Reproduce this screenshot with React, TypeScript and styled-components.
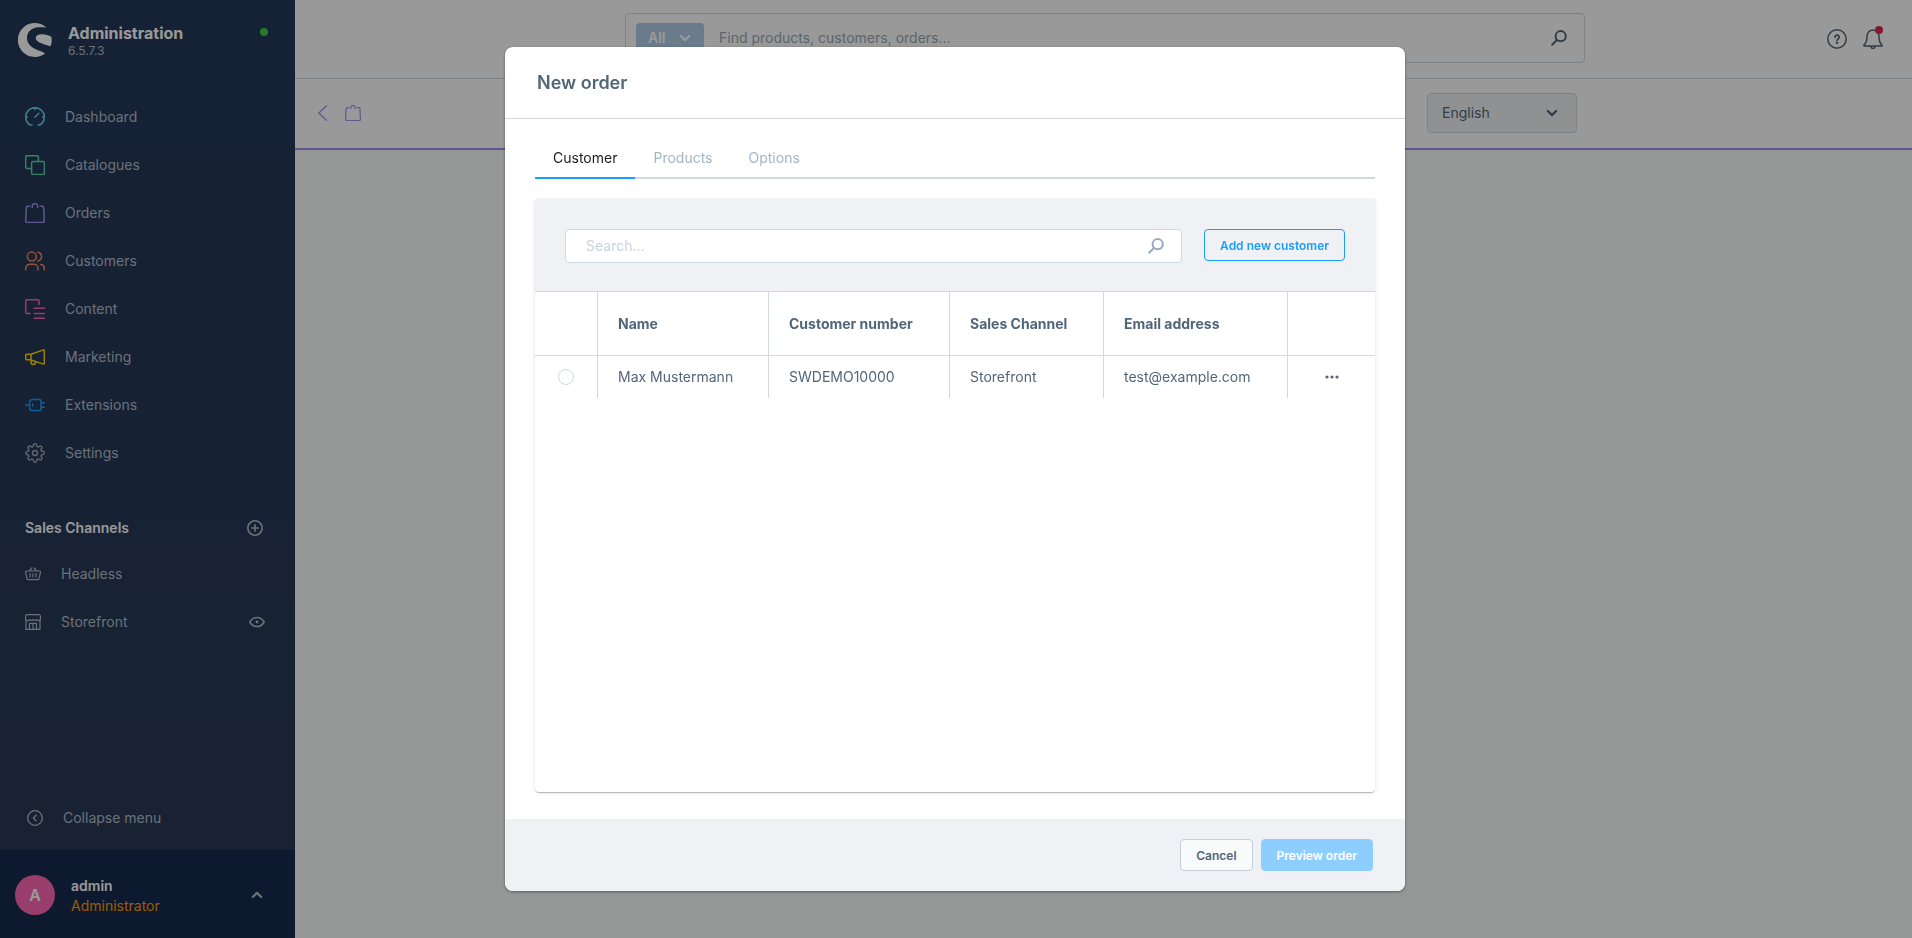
import React from 'react';
import styled, { createGlobalStyle } from 'styled-components';
import { FiSettings } from 'react-icons/fi';

const GlobalStyle = createGlobalStyle`
  *, *::before, *::after { box-sizing: border-box; }
  html, body, #root { height: 100%; }
  body {
    margin: 0;
    font-family: Inter, "Liberation Sans", sans-serif;
    font-size: 14px;
    line-height: 20px;
    color: #52667a;
    background: #f9fafb;
    -webkit-font-smoothing: antialiased;
  }
  button, input, select { font: inherit; color: inherit; }
  button { cursor: pointer; }
  a { color: inherit; text-decoration: none; }
  svg { display: block; flex: none; }
`;

const Page = styled.div`
  display: flex;
  min-height: 100vh;
`;

/* ---------- icons ---------- */

type IconProps = { size?: number; box?: number; weight?: number; children: React.ReactNode };

const Icon = ({ size = 20, box = 20, weight = 1.5, children }: IconProps) => (
  <svg
    width={size}
    height={size}
    viewBox={`0 0 ${box} ${box}`}
    fill="none"
    stroke="currentColor"
    strokeWidth={weight}
    strokeLinecap="round"
    strokeLinejoin="round"
    aria-hidden="true"
  >
    {children}
  </svg>
);

const DashboardIcon = () => (
  <Icon>
    <path d="M7 18H5.2A9.35 9.35 0 1 1 14.8 18H13M10 .8v1.6M.8 10h1.6M19.2 10h-1.6M10 10.3l3.8-4" />
  </Icon>
);
const CatalogueIcon = () => (
  <Icon>
    <path d="M6.4 13.4H2A1.4 1.4 0 0 1 .65 12V2A1.4 1.4 0 0 1 2 .65h10A1.4 1.4 0 0 1 13.4 2v4.4" />
    <rect x="6.6" y="6.6" width="12.8" height="12.8" rx="1.4" />
  </Icon>
);
const BagIcon = ({ size = 20, weight = 1.5 }: { size?: number; weight?: number }) => (
  <Icon size={size} weight={weight}>
    <path d="M4.8 3.3H2.7a1.4 1.4 0 0 0-1.4 1.3L.7 18a1.3 1.3 0 0 0 1.3 1.4h16a1.3 1.3 0 0 0 1.3-1.4L18.7 4.6a1.4 1.4 0 0 0-1.4-1.3h-2.1M7.3 4.5V3.3a2.7 2.7 0 0 1 5.4 0v1.2" />
  </Icon>
);
const CustomersIcon = () => (
  <Icon>
    <circle cx="6.8" cy="5.6" r="4.5" />
    <path d="M13 1.2a4.5 4.5 0 0 1 0 8.8M.7 18.9v-1.6a4 4 0 0 1 4-4h4.2a4 4 0 0 1 4 4v1.6M15.6 13.4a4 4 0 0 1 3.7 4v1.5" />
  </Icon>
);
const ContentIcon = () => (
  <Icon>
    <path d="M5 14.4H2A1.4 1.4 0 0 1 .7 13V2A1.4 1.4 0 0 1 2 .7h10.6A1.4 1.4 0 0 1 14 2v3.6M9.2 9.3h10.2M9.2 14.4h10.2M9.2 19.2h10.2" />
  </Icon>
);
const MarketingIcon = () => (
  <Icon>
    <path d="M6 7.3 18.5 2.9a.6.6 0 0 1 .8.6v13a.6.6 0 0 1-.8.6L6 13V7.3H1.6a.9.9 0 0 0-.9.9v3.6c0 .5.4.9.9.9H6M6.1 13v2a2.2 2.2 0 0 0 4.4.4v-.8" />
  </Icon>
);
const ExtensionsIcon = () => (
  <Icon>
    <path d="M.7 10h4M7.4 4.4h7.2a1.4 1.4 0 0 1 1.4 1.4v8.4a1.4 1.4 0 0 1-1.4 1.4H7.4a2.8 2.8 0 0 1-2.8-2.8V7.2a2.8 2.8 0 0 1 2.8-2.8zM16 7.7h3.4M16 12.3h3.4M7.6 9v2" />
  </Icon>
);
const BasketIcon = () => (
  <Icon size={16} box={16} weight={1.2}>
    <path d="M1.4 5h13.2a.9.9 0 0 1 .9 1.1L14 12.6a1.2 1.2 0 0 1-1.2 1H3.2a1.2 1.2 0 0 1-1.2-1L.5 6.1A.9.9 0 0 1 1.4 5zM4.3 4.8l2.5-2.8M11.7 4.8 9.2 2M5 7.7v3.2M8 7.7v3.2M11 7.7v3.2" />
  </Icon>
);
const StoreIcon = () => (
  <Icon size={16} box={16} weight={1.2}>
    <path d="M1 6v9.4h14V6M2.2.6h11.6A1.6 1.6 0 0 1 15.4 2.200v2a1.900 1.900 0 0 1-3.600 1.200 2.200 2.200 0 0 1-3.800 0 2.200 2.200 0 0 1-3.800 0A1.900 1.900 0 0 1 .6 4.200v-2A1.600 1.600 0 0 1 2.200.6zM4.500 15.400V9.300h7v6.100M8 9.300v6.100" />
  </Icon>
);
const EyeIcon = () => (
  <Icon size={16} box={16} weight={1.5}>
    <path d="M.8 8C2.6 5 5.1 3.4 8 3.4S13.4 5 15.2 8c-1.8 3-4.3 4.6-7.2 4.6S2.6 11 .8 8z" />
    <circle cx="8" cy="8" r="0.7" fill="currentColor" />
  </Icon>
);
const PlusCircleIcon = () => (
  <Icon size={16} box={16} weight={1.6}>
    <circle cx="8" cy="8" r="7.2" />
    <path d="M8 4.8v6.4M4.8 8h6.4" />
  </Icon>
);
const CollapseIcon = () => (
  <Icon size={16} box={16} weight={1.3}>
    <circle cx="8" cy="8" r="7.3" />
    <path d="M9 5.3 6.4 8 9 10.7" />
  </Icon>
);
const ChevronIcon = ({ up = false }: { up?: boolean }) => (
  <Icon size={12} box={12} weight={2.2}>
    <path d={up ? 'M1.8 8 6 3.9 10.2 8' : 'M1.8 4 6 8.1 10.2 4'} />
  </Icon>
);
const BackIcon = () => (
  <Icon size={16} box={16} weight={1.3}>
    <path d="M11.5.8 3.8 8l7.7 7.2" />
  </Icon>
);
const SearchIcon = () => (
  <Icon size={16} box={16} weight={2}>
    <circle cx="9.7" cy="6.2" r="5.1" />
    <path d="M5.9 10 1.2 14.8" />
  </Icon>
);
const HelpIcon = () => (
  <Icon weight={1.5}>
    <circle cx="10" cy="10" r="9.2" />
    <path d="M8 8.3a2.1 2.1 0 1 1 3.2 1.7c-.8.5-1.2.7-1.2 1.2" strokeWidth="1.7" />
    <circle cx="10" cy="13.7" r="0.5" fill="currentColor" />
  </Icon>
);
const BellIcon = () => (
  <Icon weight={1.5}>
    <path d="M10 .9a6 6 0 0 0-6 6c0 5-1.2 7.500-2.900 9a.7.7 0 0 0 .5 1.200h16.800a.7.7 0 0 0 .5-1.200C17.200 14.400 16 11.900 16 6.900a6 6 0 0 0-6-6zM8.200 18.200a1.900 1.900 0 0 0 3.600 0" />
  </Icon>
);
const DotsIcon = () => (
  <svg width="14" height="4" viewBox="0 0 14 4" fill="currentColor" aria-hidden="true">
    <circle cx="2" cy="2" r="1.6" />
    <circle cx="7" cy="2" r="1.6" />
    <circle cx="12" cy="2" r="1.6" />
  </svg>
);
const Logo = () => (
  <svg width="34" height="34" viewBox="0 0 34 34" fill="#fff" aria-hidden="true">
    <path d="M28.4 4.500A17 17 0 1 0 27 30.600c-.8-.9-3.400-1.900-6.200-3C15.500 25.500 9 22.400 9 14.800 9 9 13.400 4.600 20.500 4.300c2.900-.1 5.300 0 7.900.2z" />
    <path d="M33.400 13.800C31 12 27.600 11.200 23.600 11.200c-3.800 0-5.900 1.500-5.900 3.700 0 3.300 4.600 5 9 6.500 2.300.7 4.300 1.300 5.900 1.900a17 17 0 0 0 .8-9.500z" />
  </svg>
);

/* ---------- sidebar ---------- */

const Sidebar = styled.aside`
  flex: none;
  display: flex;
  flex-direction: column;
  width: 295px;
  color: #b3bfcc;
  background: linear-gradient(#243758, #293a54);
`;
const Brand = styled.header`
  display: flex;
  align-items: flex-start;
  gap: 16px;
  padding: 23px 27px 0 18px;
`;
const BrandText = styled.div`
  flex: 1;
`;
const BrandName = styled.h1`
  margin: 0;
  font-size: 16px;
  line-height: 20px;
  font-weight: 700;
  color: #fff;
`;
const Version = styled.span`
  display: block;
  font-size: 12px;
  line-height: 16px;
`;
const StatusDot = styled.span`
  width: 8px;
  height: 8px;
  margin-top: 5px;
  border-radius: 50%;
  background: #37d046;
`;
const Menu = styled.nav`
  display: flex;
  flex-direction: column;
  padding-top: 34px;
`;
const MenuLink = styled.a`
  display: flex;
  align-items: center;
  gap: 20px;
  height: 48px;
  padding: 0 30px 0 25px;
`;
const MenuIcon = styled.span<{ $color: string }>`
  display: flex;
  justify-content: center;
  width: 20px;
  color: ${(p) => p.$color};
`;
const SectionHead = styled.div`
  display: flex;
  align-items: center;
  justify-content: space-between;
  height: 45px;
  margin-top: 28px;
  padding: 0 32px 0 25px;
`;
const SectionTitle = styled.h2`
  margin: 0;
  font-size: 14px;
  line-height: 20px;
  font-weight: 600;
  color: #fff;
`;
const GhostButton = styled.button`
  display: flex;
  padding: 0;
  border: 0;
  background: none;
`;
const ChannelRow = styled.div`
  display: flex;
  align-items: center;
  height: 48px;
  padding: 0 30px 0 25px;
`;
const ChannelLink = styled.a`
  flex: 1;
  display: flex;
  align-items: center;
  gap: 20px;
`;
const CollapseButton = styled.button`
  display: flex;
  align-items: center;
  gap: 20px;
  height: 64px;
  margin-top: auto;
  padding: 0 27px;
  border: 0;
  background: none;
`;
const UserButton = styled.button`
  display: flex;
  align-items: center;
  gap: 16px;
  height: 88px;
  padding: 2px 32px 0 15px;
  border: 0;
  text-align: left;
  background: #172b4e;
`;
const Avatar = styled.span`
  display: flex;
  align-items: center;
  justify-content: center;
  width: 40px;
  height: 40px;
  border-radius: 50%;
  font-size: 16px;
  font-weight: 600;
  color: #fff;
  background: #ff68b4;
`;
const UserText = styled.span`
  flex: 1;
  display: flex;
  flex-direction: column;
  padding-top: 2px;
`;
const UserName = styled.strong`
  font-weight: 600;
  color: #fff;
`;
const UserRole = styled.span`
  color: #ff9a00;
`;

/* ---------- header and smart bar ---------- */

const Main = styled.main`
  flex: 1;
  min-width: 0;
`;
const TopBar = styled.header`
  display: grid;
  grid-template-columns: 330px minmax(0, 960px) 1fr;
  align-items: center;
  height: 79px;
  border-bottom: 1px solid #d1d9e0;
  background: #fff;
`;
const GlobalSearch = styled.div`
  grid-column: 2;
  display: flex;
  align-items: center;
  height: 50px;
  margin-bottom: 2px;
  padding: 0 17px 0 10px;
  border: 1px solid #d1d9e0;
  border-radius: 4px;
`;
const ScopeButton = styled.button`
  display: flex;
  align-items: center;
  justify-content: space-between;
  width: 68px;
  height: 30px;
  padding: 0 13px 0 12px;
  border: 0;
  border-radius: 4px;
  font-weight: 600;
  color: #fff;
  background: #b1cde8;
`;
const PlainInput = styled.input`
  flex: 1;
  min-width: 0;
  padding: 0 15px;
  border: 0;
  outline: 0;
  background: none;
  &::placeholder { color: #9aa8b5; opacity: 1; }
`;
const TopActions = styled.div`
  display: flex;
  justify-content: flex-end;
  gap: 16px;
  padding-right: 29px;
`;
const BellButton = styled(GhostButton)`
  position: relative;
  &::after {
    content: '';
    position: absolute;
    top: -3px;
    right: 0;
    width: 8px;
    height: 8px;
    border-radius: 50%;
    background: #de294c;
  }
`;
const SmartBar = styled.div`
  display: grid;
  grid-template-columns: auto auto 1fr 150px;
  align-items: center;
  column-gap: 14px;
  height: 71px;
  padding: 0 335px 2px 20px;
  border-bottom: 2px solid #a092f0;
  color: #a092f0;
  background: #fff;
`;
const LanguageField = styled.div`
  grid-column: 4;
  display: grid;
  align-items: center;
  color: #52667a;
  > * { grid-area: 1 / 1; }
  > svg { justify-self: end; margin-right: 19px; pointer-events: none; }
`;
const LanguageSelect = styled.select`
  appearance: none;
  width: 100%;
  height: 40px;
  padding: 0 14px;
  border: 1px solid #d1d9e0;
  border-radius: 4px;
  background: #f0f2f5;
`;

/* ---------- modal ---------- */

const Backdrop = styled.div`
  position: fixed;
  inset: 0;
  display: flex;
  align-items: center;
  justify-content: center;
  padding-right: 2px;
  background: rgba(0, 0, 0, 0.4);
`;
const Dialog = styled.section`
  display: flex;
  flex-direction: column;
  width: 900px;
  max-width: 95vw;
  height: 90vh;
  border-radius: 8px;
  overflow: hidden;
  background: #fff;
  box-shadow: 0 1px 3px rgba(0, 0, 0, 0.4);
`;
const DialogHead = styled.header`
  display: flex;
  align-items: center;
  flex: none;
  height: 72px;
  padding: 2px 32px 0;
  border-bottom: 1px solid #d1d9e0;
`;
const DialogTitle = styled.h2`
  margin: 0;
  font-size: 18px;
  line-height: 24px;
  font-weight: 600;
`;
const DialogBody = styled.div`
  flex: 1;
  display: flex;
  flex-direction: column;
  min-height: 0;
  padding: 20px 30px 27px;
`;
const Tabs = styled.div`
  display: flex;
  border-bottom: 2px solid #d1d9e0;
`;
const Tab = styled.button<{ $active?: boolean }>`
  height: 40px;
  margin-bottom: -2px;
  padding: 0 18px;
  border: 0;
  border-bottom: 2px solid ${(p) => (p.$active ? '#189eff' : 'transparent')};
  background: none;
  color: ${(p) => (p.$active ? '#1a1d21' : '#a3b5c7')};
`;
const Card = styled.div`
  flex: 1;
  margin-top: 20px;
  border-radius: 4px;
  box-shadow: 0 1px 1px rgba(0, 0, 0, 0.08), 0 2px 1px -1px rgba(0, 0, 0, 0.16), 0 1px 4px rgba(0, 0, 0, 0.12);
`;
const CardToolbar = styled.div`
  display: flex;
  align-items: flex-start;
  gap: 22px;
  height: 93px;
  padding: 30px;
  border-bottom: 1px solid #d1d9e0;
  background: #f0f1f5;
`;
const SearchField = styled.div`
  flex: 1;
  display: flex;
  align-items: center;
  height: 34px;
  padding: 0 17px 0 5px;
  border: 1px solid #d1d9e0;
  border-radius: 4px;
  color: #98a8be;
  background: #fff;
`;
const CustomerInput = styled(PlainInput)`
  color: #52667a;
  &::placeholder { color: #c8d2dd; }
`;
const Button = styled.button<{ $kind: 'outline' | 'plain' | 'primary' }>`
  height: 32px;
  padding: 2px 15px 0;
  border: 1px solid ${(p) => ({ outline: '#189eff', plain: '#c2cedb', primary: '#8ccfff' })[p.$kind]};
  border-radius: 4px;
  font-size: 12px;
  line-height: 16px;
  font-weight: 600;
  color: ${(p) => ({ outline: '#189eff', plain: '#52667a', primary: '#fff' })[p.$kind]};
  background: ${(p) => ({ outline: 'transparent', plain: '#f9fafb', primary: '#8ccfff' })[p.$kind]};
`;
const Grid = styled.table`
  width: 100%;
  table-layout: fixed;
  border-collapse: separate;
  border-spacing: 0;
`;
const Col = styled.col<{ $width?: number }>`
  width: ${(p) => (p.$width ? `${p.$width}px` : 'auto')};
`;
const Th = styled.th`
  height: 64px;
  padding: 2px 20px 0;
  border-right: 1px solid #d1d9e0;
  border-bottom: 1px solid #d1d9e0;
  text-align: left;
  font-weight: 700;
  &:last-child { border-right: 0; }
`;
const Td = styled.td<{ $center?: boolean }>`
  height: 42px;
  padding: ${(p) => (p.$center ? '0' : '0 20px')};
  border-right: 1px solid #d1d9e0;
  text-align: ${(p) => (p.$center ? 'center' : 'left')};
  &:last-child { border-right: 0; }
`;
const Radio = styled.input`
  appearance: none;
  display: block;
  width: 16px;
  height: 16px;
  margin: 0 auto;
  border: 1px solid #d1d9e0;
  border-radius: 50%;
  background: #fff;
  &:checked { border: 5px solid #189eff; }
`;
const RowMenu = styled(GhostButton)`
  margin: 0 auto;
`;
const DialogFoot = styled.footer`
  display: flex;
  flex: none;
  align-items: center;
  justify-content: flex-end;
  gap: 8px;
  height: 72px;
  padding: 0 32px;
  background: #f0f1f5;
`;

const menu = [
  { label: 'Dashboard', color: '#6ad6f0', icon: <DashboardIcon /> },
  { label: 'Catalogues', color: '#57d9a3', icon: <CatalogueIcon /> },
  { label: 'Orders', color: '#a092f0', icon: <BagIcon /> },
  { label: 'Customers', color: '#f88962', icon: <CustomersIcon /> },
  { label: 'Content', color: '#ff68b4', icon: <ContentIcon /> },
  { label: 'Marketing', color: '#ffd700', icon: <MarketingIcon /> },
  { label: 'Extensions', color: '#189eff', icon: <ExtensionsIcon /> },
  { label: 'Settings', color: '#9aa8b5', icon: <FiSettings size={20} strokeWidth={1.8} /> },
];

const headings = ['Name', 'Customer number', 'Sales Channel', 'Email address'];
const customer = ['Max Mustermann', 'SWDEMO10000', 'Storefront', 'test@example.com'];

export default function App() {
  return (
    <>
      <GlobalStyle />
      <Page>
        <Sidebar>
          <Brand>
            <Logo />
            <BrandText>
              <BrandName>Administration</BrandName>
              <Version>6.5.7.3</Version>
            </BrandText>
            <StatusDot />
          </Brand>
          <Menu aria-label="Main menu">
            {menu.map((item) => (
              <MenuLink href="#" key={item.label}>
                <MenuIcon $color={item.color}>{item.icon}</MenuIcon>
                {item.label}
              </MenuLink>
            ))}
          </Menu>
          <SectionHead>
            <SectionTitle>Sales Channels</SectionTitle>
            <GhostButton aria-label="Add sales channel"><PlusCircleIcon /></GhostButton>
          </SectionHead>
          <ChannelRow>
            <ChannelLink href="#"><BasketIcon />Headless</ChannelLink>
          </ChannelRow>
          <ChannelRow>
            <ChannelLink href="#"><StoreIcon />Storefront</ChannelLink>
            <GhostButton aria-label="Open storefront"><EyeIcon /></GhostButton>
          </ChannelRow>
          <CollapseButton><CollapseIcon />Collapse menu</CollapseButton>
          <UserButton>
            <Avatar>A</Avatar>
            <UserText>
              <UserName>admin</UserName>
              <UserRole>Administrator</UserRole>
            </UserText>
            <ChevronIcon up />
          </UserButton>
        </Sidebar>

        <Main>
          <TopBar>
            <GlobalSearch>
              <ScopeButton>All<ChevronIcon /></ScopeButton>
              <PlainInput type="search" aria-label="Global search" placeholder="Find products, customers, orders..." />
              <SearchIcon />
            </GlobalSearch>
            <TopActions>
              <GhostButton aria-label="Help"><HelpIcon /></GhostButton>
              <BellButton aria-label="Notifications"><BellIcon /></BellButton>
            </TopActions>
          </TopBar>
          <SmartBar>
            <GhostButton aria-label="Back"><BackIcon /></GhostButton>
            <BagIcon size={16} />
            <LanguageField>
              <LanguageSelect aria-label="Language" defaultValue="en">
                <option value="en">English</option>
              </LanguageSelect>
              <ChevronIcon />
            </LanguageField>
          </SmartBar>
        </Main>
      </Page>

      <Backdrop>
        <Dialog role="dialog" aria-modal="true" aria-labelledby="dialog-title">
          <DialogHead>
            <DialogTitle id="dialog-title">New order</DialogTitle>
          </DialogHead>
          <DialogBody>
            <Tabs role="tablist">
              <Tab role="tab" aria-selected="true" $active>Customer</Tab>
              <Tab role="tab">Products</Tab>
              <Tab role="tab">Options</Tab>
            </Tabs>
            <Card>
              <CardToolbar>
                <SearchField>
                  <CustomerInput type="search" aria-label="Search customers" placeholder="Search..." />
                  <SearchIcon />
                </SearchField>
                <Button $kind="outline">Add new customer</Button>
              </CardToolbar>
              <Grid>
                <colgroup>
                  <Col $width={63} />
                  <Col $width={171} />
                  <Col $width={181} />
                  <Col $width={154} />
                  <Col $width={184} />
                  <Col />
                </colgroup>
                <thead>
                  <tr>
                    <Th />
                    {headings.map((text) => <Th key={text} scope="col">{text}</Th>)}
                    <Th />
                  </tr>
                </thead>
                <tbody>
                  <tr>
                    <Td $center><Radio type="radio" name="customer" aria-label="Select Max Mustermann" /></Td>
                    {customer.map((text) => <Td key={text}>{text}</Td>)}
                    <Td $center><RowMenu aria-label="Row actions"><DotsIcon /></RowMenu></Td>
                  </tr>
                </tbody>
              </Grid>
            </Card>
          </DialogBody>
          <DialogFoot>
            <Button $kind="plain">Cancel</Button>
            <Button $kind="primary" disabled>Preview order</Button>
          </DialogFoot>
        </Dialog>
      </Backdrop>
    </>
  );
}
